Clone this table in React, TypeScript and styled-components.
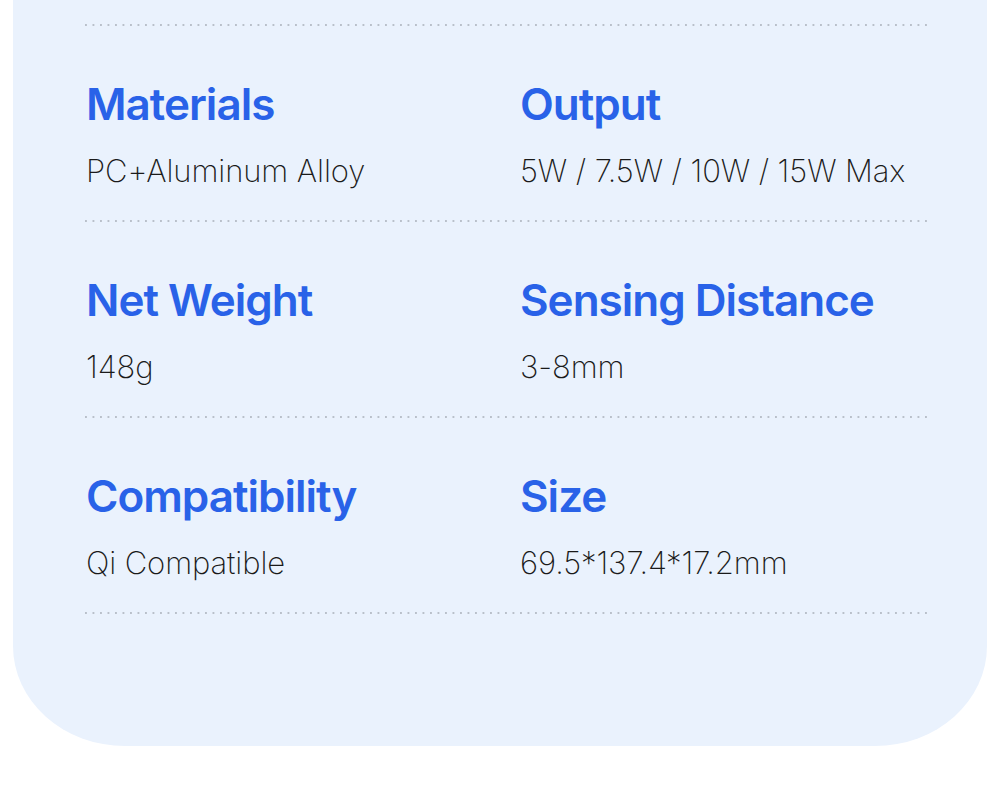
import styled, { createGlobalStyle } from 'styled-components'

const GlobalStyle = createGlobalStyle`
  html, body {
    margin: 0;
    padding: 0;
    background: #ffffff;
  }
  body {
    font-family: Inter, "Noto Sans", sans-serif;
  }
`

const Page = styled.div`
  width: 1000px;
  height: 796px;
  background: #ffffff;
  padding: 0 13px;
  box-sizing: border-box;
  overflow: hidden;
`

const Card = styled.section`
  background: #eaf2fd;
  border-radius: 0 0 112px 112px / 0 0 100px 100px;
  padding: 24px 60px 132px 72px;
`

const Divider = styled.div`
  height: 2px;
  background-image: linear-gradient(to right, #b9c0ca 2px, transparent 2px);
  background-size: 7.5px 2px;
  background-repeat: repeat-x;
`

const Row = styled.div`
  display: grid;
  grid-template-columns: 434px 1fr;
  height: 194px;
  padding-left: 1px;
  box-sizing: border-box;
`

const Spec = styled.div`
  display: flex;
  flex-direction: column;
  padding-top: 51px;
`

const Label = styled.h3`
  margin: 0;
  font-size: 44px;
  line-height: 54px;
  font-weight: 600;
  letter-spacing: -1px;
  color: #2962e8;
`

const Value = styled.p`
  margin: 20px 0 0;
  font-size: 31px;
  line-height: 40px;
  font-weight: 200;
  letter-spacing: -0.1px;
  color: #1a1a1a;
`

const SPECS: [string, string][][] = [
  [
    ['Materials', 'PC+Aluminum Alloy'],
    ['Output', '5W / 7.5W / 10W / 15W Max'],
  ],
  [
    ['Net Weight', '148g'],
    ['Sensing Distance', '3-8mm'],
  ],
  [
    ['Compatibility', 'Qi Compatible'],
    ['Size', '69.5*137.4*17.2mm'],
  ],
]

export default function App() {
  return (
    <>
      <GlobalStyle />
      <Page>
        <Card>
          <Divider />
          {SPECS.map((row, i) => (
            <div key={i}>
              <Row>
                {row.map(([label, value]) => (
                  <Spec key={label}>
                    <Label>{label}</Label>
                    <Value>{value}</Value>
                  </Spec>
                ))}
              </Row>
              <Divider />
            </div>
          ))}
        </Card>
      </Page>
    </>
  )
}
